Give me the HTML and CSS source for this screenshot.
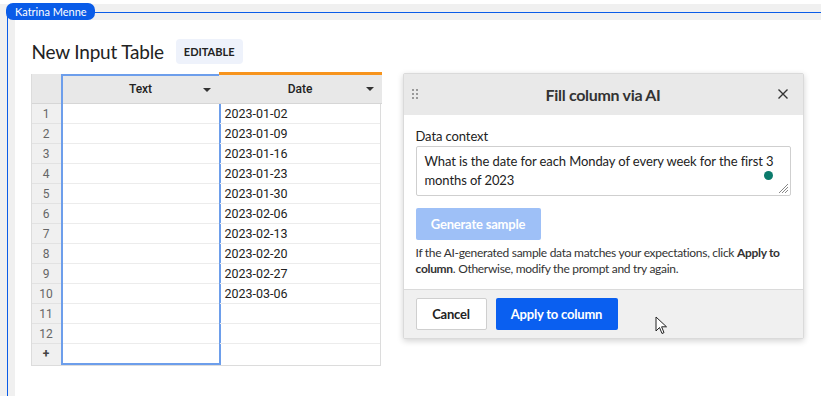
FILE: index.html
```html
<!DOCTYPE html>
<html lang="en">
<head>
    <meta charset="UTF-8">
    <title>New Input Table</title>
    <link rel="stylesheet" href="styles.css">
</head>
<body>
    <div class="canvas">
        <div class="selection">
            <span class="user-tag">Katrina Menne</span>
            <div class="page">
                <div class="title-row">
                    <h1>New Input Table</h1>
                    <span class="badge">EDITABLE</span>
                </div>

                <div class="content">
                    <div class="sheet">
                        <div class="col col-index">
                            <div class="head"></div>
                            <div class="cell">1</div>
                            <div class="cell">2</div>
                            <div class="cell">3</div>
                            <div class="cell">4</div>
                            <div class="cell">5</div>
                            <div class="cell">6</div>
                            <div class="cell">7</div>
                            <div class="cell">8</div>
                            <div class="cell">9</div>
                            <div class="cell">10</div>
                            <div class="cell">11</div>
                            <div class="cell">12</div>
                            <div class="cell add">+</div>
                        </div>
                        <div class="col col-text">
                            <div class="head">Text <span class="caret"></span></div>
                            <div class="cell"></div>
                            <div class="cell"></div>
                            <div class="cell"></div>
                            <div class="cell"></div>
                            <div class="cell"></div>
                            <div class="cell"></div>
                            <div class="cell"></div>
                            <div class="cell"></div>
                            <div class="cell"></div>
                            <div class="cell"></div>
                            <div class="cell"></div>
                            <div class="cell"></div>
                            <div class="cell"></div>
                        </div>
                        <div class="col col-date">
                            <div class="head">Date <span class="caret"></span></div>
                            <div class="cell">2023-01-02</div>
                            <div class="cell">2023-01-09</div>
                            <div class="cell">2023-01-16</div>
                            <div class="cell">2023-01-23</div>
                            <div class="cell">2023-01-30</div>
                            <div class="cell">2023-02-06</div>
                            <div class="cell">2023-02-13</div>
                            <div class="cell">2023-02-20</div>
                            <div class="cell">2023-02-27</div>
                            <div class="cell">2023-03-06</div>
                            <div class="cell"></div>
                            <div class="cell"></div>
                            <div class="cell"></div>
                        </div>
                    </div>

                    <div class="panel">
                        <div class="panel-header">
                            <svg class="grip" width="8" height="12" viewBox="0 0 8 12">
                                <rect x="1" y="1" width="2" height="2" fill="#999"/>
                                <rect x="5" y="1" width="2" height="2" fill="#999"/>
                                <rect x="1" y="5" width="2" height="2" fill="#999"/>
                                <rect x="5" y="5" width="2" height="2" fill="#999"/>
                                <rect x="1" y="9" width="2" height="2" fill="#999"/>
                                <rect x="5" y="9" width="2" height="2" fill="#999"/>
                            </svg>
                            <span class="panel-title">Fill column via AI</span>
                            <svg class="close" width="12" height="12" viewBox="0 0 12 12">
                                <path d="M1.5 1.5 L10.5 10.5 M10.5 1.5 L1.5 10.5" stroke="#333" stroke-width="1.4"/>
                            </svg>
                        </div>
                        <div class="panel-body">
                            <label class="field-label">Data context</label>
                            <div class="textarea">
                                What is the date for each Monday of every week for the first 3 months of 2023
                                <span class="dot"></span>
                                <svg class="resize" width="12" height="12" viewBox="0 0 12 12">
                                    <path d="M11 2 L2 11 M11 5 L5 11 M11 8 L8 11" stroke="#888" stroke-width="1"/>
                                </svg>
                            </div>
                            <button class="btn btn-disabled">Generate sample</button>
                            <p class="hint">If the AI-generated sample data matches your expectations, click <b>Apply to column</b>. Otherwise, modify the prompt and try again.</p>
                        </div>
                        <div class="panel-footer">
                            <button class="btn btn-secondary">Cancel</button>
                            <button class="btn btn-primary">Apply to column</button>
                            <svg class="pointer" width="14" height="20" viewBox="0 0 14 20">
                                <path d="M1 1 L1 15 L4.5 11.5 L7 17.5 L9 16.6 L6.6 10.8 L11.5 10.8 Z" fill="#fff" stroke="#222" stroke-width="1" stroke-linejoin="round"/>
                            </svg>
                        </div>
                    </div>
                </div>
            </div>
        </div>
    </div>
</body>
</html>
```

FILE: styles.css
```css
* {
    margin: 0;
    padding: 0;
    box-sizing: border-box;
}

body {
    font-family: 'Lato', 'Noto Sans', sans-serif;
    color: #222;
    background-color: #ffffff;
    overflow: hidden;
}

.canvas {
    margin-top: 4px;
    background-color: #f0f0f0;
    padding: 8px 0 0 7px;
    height: 392px;
}

.selection {
    position: relative;
    border-top: 1.5px solid #0a5ce8;
    border-left: 1.5px solid #0a5ce8;
    padding: 6.5px 0 0 6.5px;
    height: 100%;
}

.user-tag {
    position: absolute;
    left: -2px;
    top: -10px;
    background-color: #0a5ce8;
    color: #fff;
    font-size: 11px;
    line-height: 17px;
    padding: 0 8px 0 9px;
    border-radius: 7px;
}

.page {
    background-color: #fff;
    height: 100%;
    padding: 19px 0 0 17px;
}

.title-row {
    display: flex;
    align-items: center;
    gap: 12px;
    height: 26px;
}

h1 {
    font-size: 19px;
    font-weight: 400;
    letter-spacing: -0.2px;
    color: #222;
}

.badge {
    background-color: #eef2fb;
    border-radius: 4px;
    font-size: 11px;
    font-weight: 700;
    padding: 0 8px;
    line-height: 25px;
}

.content {
    display: flex;
    align-items: flex-start;
    margin-top: 8px;
    margin-left: -1px;
    gap: 22px;
}

.sheet {
    display: flex;
    border: 1px solid #dcdcdc;
    border-top: none;
    margin-top: 1px;
    font-family: 'Roboto', sans-serif;
    font-size: 12px;
}

.col .head {
    height: 30px;
    background-color: #e8e8e8;
    border-bottom: 1px solid #d6d6d6;
    display: flex;
    align-items: center;
    justify-content: center;
    position: relative;
    font-weight: 500;
    font-size: 12px;
    color: #222;
}

.col .cell {
    height: 20px;
    border-bottom: 1px solid #ececec;
    line-height: 20px;
}

.col .cell:last-child {
    border-bottom: none;
}

.col-index {
    width: 30px;
    background-color: #f0f0f0;
    border-right: 1px solid #dcdcdc;
}

.col-index .cell {
    text-align: center;
    color: #666;
    font-size: 12px;
    border-bottom-color: #e2e2e2;
}

.col-index .add {
    font-weight: 700;
    color: #444;
}

.col-text {
    width: 160px;
    border: 2px solid #6d9eeb;
    margin-left: -1px;
}

.col-text .head {
    height: 28px;
}

.col-text .cell:last-child {
    height: 19px;
}

.col-date {
    width: 160px;
    margin-left: -1px;
}

.col-date .head {
    border-top: 3px solid #f7941d;
    margin-top: -2px;
    margin-right: -2px;
    margin-left: -1px;
    height: 32px;
}

.col-date .cell {
    padding-left: 5px;
    font-size: 12.5px;
    color: #222;
}

.caret {
    position: absolute;
    right: 8px;
    top: 12px;
    width: 0;
    height: 0;
    border-left: 4px solid transparent;
    border-right: 4px solid transparent;
    border-top: 4px solid #333;
}

.panel {
    width: 401px;
    border: 1px solid #dadada;
    border-radius: 2px;
    box-shadow: 0 2px 6px rgba(0, 0, 0, 0.18);
    background-color: #fff;
}

.panel-header {
    height: 41px;
    background-color: #e9e9e9;
    display: flex;
    align-items: center;
    justify-content: center;
    position: relative;
}

.panel-title {
    font-size: 16px;
    font-weight: 700;
    letter-spacing: -0.3px;
    color: #333;
}

.grip {
    position: absolute;
    left: 7px;
    top: 14px;
}

.close {
    position: absolute;
    right: 14px;
    top: 14px;
}

.panel-body {
    padding: 12px 12px 12px 12px;
}

.field-label {
    display: block;
    font-size: 13px;
    letter-spacing: -0.1px;
    line-height: 18px;
    color: #222;
}

.textarea {
    position: relative;
    margin-top: 1px;
    height: 50px;
    border: 1px solid #cfcfcf;
    border-radius: 2px;
    padding: 5px 6px 5px 8px;
    font-size: 13px;
    letter-spacing: -0.1px;
    line-height: 19px;
    color: #222;
}

.dot {
    position: absolute;
    right: 17px;
    top: 24px;
    width: 9px;
    height: 9px;
    border-radius: 50%;
    background-color: #0c7b6c;
}

.resize {
    position: absolute;
    right: 1px;
    bottom: 1px;
}

.btn {
    font-family: inherit;
    font-size: 13px;
    font-weight: 700;
    letter-spacing: -0.2px;
    border-radius: 2px;
    height: 32px;
    padding: 0;
    border: none;
    white-space: nowrap;
}

.btn-disabled {
    display: block;
    margin-top: 12px;
    background-color: #9ec0f7;
    color: #fff;
    width: 125px;
}

.hint {
    font-size: 12px;
    letter-spacing: -0.3px;
    line-height: 16px;
    color: #333;
    margin-top: 5px;
}

.panel-footer {
    background-color: #f0f0f0;
    border-top: 1px solid #dadada;
    height: 49px;
    display: flex;
    align-items: center;
    gap: 9px;
    padding: 0 12px;
    position: relative;
}

.btn-secondary {
    width: 71px;
    background-color: #fff;
    border: 1px solid #cfcfcf;
    color: #222;
}

.btn-primary {
    width: 122px;
    background-color: #0a5ff0;
    color: #fff;
}

.pointer {
    position: absolute;
    left: 251px;
    top: 26px;
}
```
